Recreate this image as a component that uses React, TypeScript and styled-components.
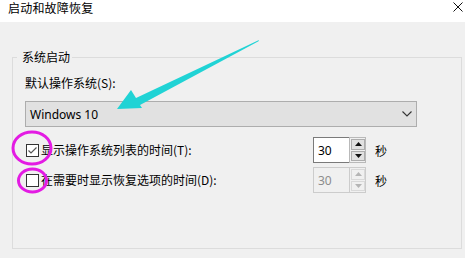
import styled, { createGlobalStyle } from "styled-components";

const GlobalStyle = createGlobalStyle`
  html, body {
    margin: 0;
    padding: 0;
    background: #f0f0f0;
  }
  body {
    font-family: "Noto Sans", "Noto Sans CJK SC", sans-serif;
    font-size: 12px;
    color: #000;
  }
`;

const cjk = `"Noto Sans CJK SC", "Noto Sans", sans-serif`;
const latin = `"Noto Sans", "Noto Sans CJK SC", sans-serif`;

const Window = styled.div`
  position: relative;
  width: 465px;
  height: 258px;
  overflow: hidden;
  background: #f0f0f0;
  display: flex;
  flex-direction: column;
`;

const TitleBar = styled.div`
  height: 22px;
  flex: none;
  background: #fff;
  display: flex;
  align-items: flex-start;
  justify-content: space-between;
  padding: 0 2px 0 8px;
  box-sizing: border-box;
`;

const Title = styled.span`
  font-family: ${cjk};
  font-size: 12px;
  line-height: 15px;
  letter-spacing: 0.2px;
`;

const CloseIcon = styled.svg`
  margin-top: 2px;
  width: 10px;
  height: 10px;
`;

const Body = styled.div`
  flex: 1;
  display: flex;
  padding: 27px 3px 9px 12px;
  box-sizing: border-box;
`;

const Group = styled.fieldset`
  flex: 1;
  margin: 0;
  padding: 10px 12px 0 12px;
  border: 1px solid #dcdcdc;
  min-width: 0;
`;

const GroupLabel = styled.legend`
  font-family: ${cjk};
  font-size: 12px;
  line-height: 16px;
  padding: 0 2px 0 5px;
  margin-left: -8px;
`;

const Stack = styled.div`
  display: flex;
  flex-direction: column;
`;

const FieldLabel = styled.div`
  font-family: ${cjk};
  font-size: 12px;
  line-height: 16px;
  margin-bottom: 10px;
`;

const Select = styled.div`
  width: 392px;
  height: 26px;
  box-sizing: border-box;
  background: #e1e1e1;
  border: 1px solid #adadad;
  display: flex;
  align-items: center;
  justify-content: space-between;
  padding: 0 4px 0 4px;
  margin-bottom: 10px;
  font-family: ${latin};
  font-size: 12px;
`;

const Rows = styled.div`
  display: flex;
  flex-direction: column;
  gap: 4px;
`;

const Row = styled.div`
  display: grid;
  grid-template-columns: 279px 53px auto;
  column-gap: 9px;
  align-items: center;
  height: 26px;
`;

const CheckLabel = styled.label`
  display: flex;
  align-items: center;
  gap: 2px;
  margin-left: 1px;
  font-family: ${cjk};
  font-size: 12px;
  line-height: 16px;
`;

const Box = styled.span`
  width: 13px;
  height: 13px;
  box-sizing: border-box;
  border: 1px solid #333;
  background: #fff;
  display: flex;
  align-items: center;
  justify-content: center;
`;

const Spinner = styled.div`
  display: flex;
  height: 26px;
  width: 53px;
`;

const SpinInput = styled.div<{ $disabled?: boolean }>`
  flex: 1;
  box-sizing: border-box;
  border: 1px solid ${(p) => (p.$disabled ? "#cccccc" : "#7a7a7a")};
  border-right: none;
  background: ${(p) => (p.$disabled ? "#f0f0f0" : "#fff")};
  color: ${(p) => (p.$disabled ? "#8c8c8c" : "#000")};
  font-family: ${latin};
  font-size: 12px;
  display: flex;
  align-items: center;
  padding-left: 4px;
`;

const SpinColumn = styled.div<{ $disabled?: boolean }>`
  width: 17px;
  box-sizing: border-box;
  border: 1px solid ${(p) => (p.$disabled ? "#cccccc" : "#b9b9b9")};
  padding: 1px 0 1px 1px;
  display: flex;
  flex-direction: column;
  gap: 1px;
  background: #f0f0f0;
`;

const SpinButton = styled.div<{ $disabled?: boolean }>`
  flex: 1;
  box-sizing: border-box;
  border: 1px solid ${(p) => (p.$disabled ? "#d9d9d9" : "#adadad")};
  background: ${(p) => (p.$disabled ? "#f0f0f0" : "#e1e1e1")};
  display: flex;
  align-items: center;
  justify-content: center;
`;

const Unit = styled.span`
  font-family: ${cjk};
  font-size: 12px;
`;

const Overlay = styled.svg`
  position: absolute;
  left: 0;
  top: 0;
  width: 465px;
  height: 258px;
  pointer-events: none;
`;

const Triangle = ({ up, color }: { up: boolean; color: string }) => (
  <svg width="7" height="4" viewBox="0 0 7 4">
    <polygon points={up ? "0,4 7,4 3.5,0" : "0,0 7,0 3.5,4"} fill={color} />
  </svg>
);

const NumberSpinner = ({ value, disabled }: { value: string; disabled?: boolean }) => {
  const tri = disabled ? "#b5b5b5" : "#111";
  return (
    <Spinner>
      <SpinInput $disabled={disabled}>{value}</SpinInput>
      <SpinColumn $disabled={disabled}>
        <SpinButton $disabled={disabled}>
          <Triangle up color={tri} />
        </SpinButton>
        <SpinButton $disabled={disabled}>
          <Triangle up={false} color={tri} />
        </SpinButton>
      </SpinColumn>
    </Spinner>
  );
};

const Checkbox = ({ checked }: { checked?: boolean }) => (
  <Box>
    {checked && (
      <svg width="11" height="11" viewBox="0 0 11 11">
        <polyline points="1.5,5.5 4,8 9.5,2.5" fill="none" stroke="#555" strokeWidth="1.2" />
      </svg>
    )}
  </Box>
);

const App = () => {
  return (
    <>
      <GlobalStyle />
      <Window>
        <TitleBar>
          <Title>启动和故障恢复</Title>
          <CloseIcon viewBox="0 0 10 10">
            <path d="M0.5 0.5 L9.5 9.5 M9.5 0.5 L0.5 9.5" stroke="#111" strokeWidth="1" />
          </CloseIcon>
        </TitleBar>
        <Body>
          <Group>
            <GroupLabel>系统启动</GroupLabel>
            <Stack>
              <FieldLabel>默认操作系统(S):</FieldLabel>
              <Select>
                <span>Windows 10</span>
                <svg width="10" height="6" viewBox="0 0 10 6">
                  <polyline points="0.5,0.5 5,5 9.5,0.5" fill="none" stroke="#333" strokeWidth="1.1" />
                </svg>
              </Select>
              <Rows>
                <Row>
                  <CheckLabel>
                    <Checkbox checked />
                    显示操作系统列表的时间(T):
                  </CheckLabel>
                  <NumberSpinner value="30" />
                  <Unit>秒</Unit>
                </Row>
                <Row>
                  <CheckLabel>
                    <Checkbox />
                    在需要时显示恢复选项的时间(D):
                  </CheckLabel>
                  <NumberSpinner value="30" disabled />
                  <Unit>秒</Unit>
                </Row>
              </Rows>
            </Stack>
          </Group>
        </Body>
        <Overlay viewBox="0 0 465 258">
          <polygon
            points="259,40 258.5,41.2 140,105 142,108 117,109 131,90 136,98"
            fill="#20d3d5"
          />
          <ellipse cx="32" cy="148" rx="19" ry="16" fill="none" stroke="#e31be3" strokeWidth="3" />
          <ellipse cx="32.5" cy="180.5" rx="14" ry="11.5" fill="none" stroke="#e31be3" strokeWidth="3" />
        </Overlay>
      </Window>
    </>
  );
};

export default App;
